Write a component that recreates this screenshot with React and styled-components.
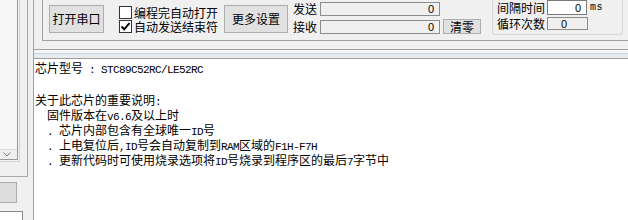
import React from 'react';
import styled, { createGlobalStyle } from 'styled-components';

const GlobalStyle = createGlobalStyle`
  html, body {
    margin: 0;
    padding: 0;
    background: #f0f0f0;
  }
  body {
    font-family: "Noto Sans CJK SC", "Liberation Sans", sans-serif;
    font-size: 12px;
    color: #000;
  }
  *, *::before, *::after {
    box-sizing: border-box;
  }
`;

const Window = styled.div`
  width: 628px;
  height: 220px;
  display: flex;
  overflow: hidden;
  background: #f0f0f0;
`;

/* bord gauche : restes d'un autre panneau coupé par la capture */
const LeftStrip = styled.div`
  width: 34px;
  flex: none;
  display: flex;
  flex-direction: column;
  border-right: 1px solid #a0a0a0;
  overflow: hidden;
`;

const OuterFrame = styled.div`
  width: 28px;
  height: 177px;
  flex: none;
  border-right: 1px solid #a8a8a8;
  border-bottom: 1px solid #a8a8a8;
`;

const ListPane = styled.div`
  width: 20px;
  height: 162px;
  border-right: 1px solid #d6d6d6;
  border-bottom: 1px solid #d6d6d6;
`;

const ListBox = styled.div`
  width: 18px;
  height: 160px;
  display: flex;
  flex-direction: column;
  justify-content: flex-end;
  background: #f7f7f7;
  border-right: 1px solid #9a9a9a;
  border-bottom: 1px solid #9a9a9a;
`;

const ArrowCell = styled.div`
  height: 10px;
  display: flex;
  align-items: center;
  padding-left: 3px;
  border-top: 1px solid #dcdcdc;
  background: #f0f0f0;
`;

const StubButton = styled.div`
  width: 17px;
  height: 21px;
  margin-top: 5px;
  flex: none;
  background: #dcdcdc;
  border: 1px solid #adadad;
  border-left: none;
`;

const StubBox = styled.div`
  width: 23px;
  flex: 1;
  margin-top: 8px;
  border-top: 1px solid #8a8a8a;
  border-right: 1px solid #8a8a8a;
  background: #fff;
`;

const Main = styled.div`
  flex: 1;
  min-width: 0;
  display: flex;
  flex-direction: column;
`;

const TopPanel = styled.div`
  height: 49px;
  flex: none;
  display: flex;
`;

const GroupBox = styled.div`
  flex: 1;
  height: 41px;
  margin-left: 8px;
  padding-left: 6px;
  display: flex;
  align-items: flex-start;
  border-left: 1px solid #a0a0a0;
  border-bottom: 1px solid #a0a0a0;
  overflow: hidden;
`;

const Button = styled.button`
  flex: none;
  width: ${(p) => p.$w}px;
  height: ${(p) => p.$h}px;
  margin-top: ${(p) => p.$top || 0}px;
  margin-left: ${(p) => p.$left || 0}px;
  padding: 0;
  background: #e1e1e1;
  border: 1px solid #adadad;
  font-family: "Noto Sans CJK SC", sans-serif;
  font-size: 12px;
  line-height: 1;
  color: #000;
`;

const CheckCol = styled.div`
  margin-left: 15px;
  margin-top: 6px;
  display: flex;
  flex-direction: column;
  gap: 1px;
`;

const CheckRow = styled.label`
  height: 13px;
  display: flex;
  align-items: center;
  gap: 2px;
  line-height: 13px;
  white-space: nowrap;
`;

const Box = styled.span`
  width: 13px;
  height: 13px;
  flex: none;
  display: flex;
  align-items: center;
  justify-content: center;
  background: #fff;
  border: 1px solid #333;
`;

const Counters = styled.div`
  margin-left: 5px;
  margin-top: 2px;
  display: grid;
  grid-template-columns: 27px 120px auto;
  grid-template-rows: 14px 14px;
  row-gap: 4px;
  align-items: center;
`;

const Label = styled.span`
  line-height: 14px;
  white-space: nowrap;
`;

const Field = styled.div`
  width: ${(p) => p.$w}px;
  height: ${(p) => p.$h}px;
  display: flex;
  align-items: center;
  justify-content: ${(p) => (p.$left ? 'flex-start' : 'flex-end')};
  padding: 0 ${(p) => (p.$left ? 0 : 5)}px 0 ${(p) => (p.$left ? 13 : 0)}px;
  background: ${(p) => (p.$editable ? '#fff' : '#f0f0f0')};
  border: 1px solid ${(p) => (p.$editable ? '#7a7a7a' : '#8c8c8c')};
  font-family: "Liberation Sans", sans-serif;
  font-size: 11px;
`;

const SubGroup = styled.div`
  width: 131px;
  height: 35px;
  margin-left: 11px;
  padding-left: 4px;
  display: flex;
  flex-direction: column;
  border: 1px solid #d7d7d7;
  border-top: none;
  border-radius: 0 0 3px 3px;
`;

const SubRow = styled.div`
  height: ${(p) => p.$h}px;
  margin-top: ${(p) => p.$top || 0}px;
  display: flex;
  align-items: center;
  gap: 2px;
`;

const Unit = styled.span`
  margin-left: 1px;
  font-family: "Liberation Mono", monospace;
  font-size: 10px;
  letter-spacing: 0.5px;
`;

const Splitter = styled.div`
  height: 9px;
  flex: none;
  background: linear-gradient(
    to bottom,
    #a0a0a0 0 1px,
    #f9f6f6 1px 4px,
    #c3d6ea 4px 5px,
    #ebebeb 5px 9px
  );
`;

const TextArea = styled.div`
  flex: 1;
  background: #fff;
  border-top: 1px solid #a0a0a0;
  padding: 1px 0 0 1px;
  overflow: hidden;
`;

const Line = styled.div`
  height: ${(p) => p.$h || 15}px;
  line-height: 15px;
  white-space: pre;
`;

const Han = styled.span`
  font-family: "Noto Sans CJK SC", sans-serif;
  font-size: 12px;
`;

const Lat = styled.span`
  font-family: "Liberation Mono", monospace;
  font-size: 11px;
  letter-spacing: -0.6px;
  white-space: pre;
`;

const CJK = /([\u3000-\u9fff\uff00-\uffef]+)/;

function Mixed({ text }) {
  return text
    .split(CJK)
    .filter(Boolean)
    .map((part, i) => (CJK.test(part) ? <Han key={i}>{part}</Han> : <Lat key={i}>{part}</Lat>));
}

const LINES = [
  { t: '芯片型号 : STC89C52RC/LE52RC' },
  { t: '', h: 17 },
  { t: '关于此芯片的重要说明:' },
  { t: '  固件版本在v6.6及以上时' },
  { t: '  . 芯片内部包含有全球唯一ID号' },
  { t: '  . 上电复位后,ID号会自动复制到RAM区域的F1H-F7H' },
  { t: '  . 更新代码时可使用烧录选项将ID号烧录到程序区的最后7字节中' },
];

function Check({ checked, children }) {
  return (
    <CheckRow>
      <Box>
        {checked && (
          <svg width="11" height="11" viewBox="0 0 11 11">
            <path d="M1.5 5.5 L4.2 8.3 L9.5 2.2" fill="none" stroke="#000" strokeWidth="2" />
          </svg>
        )}
      </Box>
      {children}
    </CheckRow>
  );
}

export default function App() {
  return (
    <>
      <GlobalStyle />
      <Window>
        <LeftStrip>
          <OuterFrame>
            <ListPane>
              <ListBox>
                <ArrowCell>
                  <svg width="8" height="5" viewBox="0 0 8 5">
                    <path d="M0.5 0.5 L4 4 L7.5 0.5" fill="none" stroke="#7a7a7a" strokeWidth="1" />
                  </svg>
                </ArrowCell>
              </ListBox>
            </ListPane>
          </OuterFrame>
          <StubButton />
          <StubBox />
        </LeftStrip>

        <Main>
          <TopPanel>
            <GroupBox>
              <Button $w={55} $h={28} $top={5}>打开串口</Button>
              <CheckCol>
                <Check>编程完自动打开</Check>
                <Check checked>自动发送结束符</Check>
              </CheckCol>
              <Button $w={64} $h={28} $top={5} $left={6}>更多设置</Button>
              <Counters>
                <Label>发送</Label>
                <Field $w={120} $h={14}>0</Field>
                <span />
                <Label>接收</Label>
                <Field $w={120} $h={14}>0</Field>
                <Button $w={38} $h={15} $top={-1} $left={3}>清零</Button>
              </Counters>
              <SubGroup>
                <SubRow $h={15}>
                  <Label>间隔时间</Label>
                  <Field $w={40} $h={15} $editable>0</Field>
                  <Unit>ms</Unit>
                </SubRow>
                <SubRow $h={13} $top={2}>
                  <Label>循环次数</Label>
                  <Field $w={41} $h={13} $left>0</Field>
                </SubRow>
              </SubGroup>
            </GroupBox>
          </TopPanel>
          <Splitter />
          <TextArea>
            {LINES.map((l, i) => (
              <Line key={i} $h={l.h}>
                <Mixed text={l.t} />
              </Line>
            ))}
          </TextArea>
        </Main>
      </Window>
    </>
  );
}
